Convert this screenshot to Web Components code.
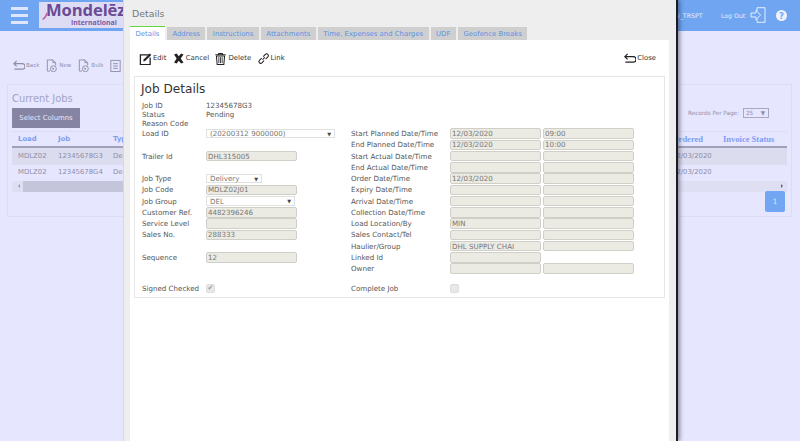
<!DOCTYPE html>
<html>
<head>
<meta charset="utf-8">
<title>Job Details</title>
<style>
  html, body { margin: 0; padding: 0; height: 100%; overflow: hidden; background: #e6e6ff; }
  body { font-family: "DejaVu Sans", Verdana, sans-serif; font-size: 7.1px; }
</style>
</head>
<body>
<job-page>
  <app-header slot="header"></app-header>
  <jobs-list slot="list"></jobs-list>
  <job-modal slot="modal"></job-modal>
</job-page>

<script>
// small helper so every component below has the same shape
function define(name, css, html) {
  customElements.define(name, class extends HTMLElement {
    constructor() {
      super();
      const shadow = this.attachShadow({ mode: 'open' });
      const markup = typeof html === 'function' ? html(this) : html;
      shadow.innerHTML = `<style>*{box-sizing:border-box}${css}</style>${markup}`;
    }
  });
}

const ICONS = {
  back: '<path d="M5 2 2 5l3 3M2.5 5H11c2 0 3 1.2 3 3s-1 3-3 3H2.5" fill="none" stroke="currentColor" stroke-width="1.3"/>',
  doc: '<path d="M2.5 1h6l3 3v3M2.5 1v12h3M8.5 1v3h3" fill="none" stroke="currentColor" stroke-width="1"/><circle cx="9" cy="10.5" r="3.2" fill="none" stroke="currentColor"/><path d="M8 9v3l2.2-1.5z" fill="currentColor"/>',
  list: '<rect x="2" y="1.5" width="10" height="12" fill="none" stroke="currentColor"/><path d="M4.5 5h5M4.5 7.5h5M4.5 10h5" stroke="currentColor"/>',
  edit: '<path d="M11 3H1.5v10.5H12V6" fill="none" stroke="currentColor" stroke-width="1.4"/><path d="M5 8.2 11.6 1.6l1.6 1.6L6.6 9.8 4.6 10.3z" fill="currentColor"/>',
  cancel: '<path d="M2.2 2.6 5 1.5l2.3 3 2.5-3 2.6 1.2-3 4.3 3 4.3-2.6 1.2-2.5-3-2.3 3-2.8-1.2L5 7z" fill="currentColor"/>',
  trash: '<path d="M1.5 3h11M5 3V1.5h4V3" fill="none" stroke="currentColor" stroke-width="1.1"/><path d="M2.6 4.2 3.4 13.5h7.2l.8-9.3z" fill="none" stroke="currentColor" stroke-width="1.1"/><path d="M5.2 5.5v6.5M7 5.5v6.5M8.8 5.5v6.5" stroke="currentColor" stroke-width=".9"/>',
  link: '<path d="M6 8.2 8.4 5.8M5 6.6 2.6 9a1.9 1.9 0 0 0 2.7 2.7L7.6 9.3M6.7 4.9 9 2.5a1.9 1.9 0 0 1 2.7 2.7L9.3 7.6" fill="none" stroke="currentColor" stroke-width="1.1"/>'
};
const icon = (name, size) => `<svg width="${size}" height="${size}" viewBox="0 0 14 14" aria-hidden="true">${ICONS[name]}</svg>`;

define('job-page', `
  :host { display: block; position: relative; width: 800px; height: 441px; overflow: hidden; background: #e6e6ff; }
  ::slotted([slot=modal]) { position: absolute; left: 124px; top: 0; }
`, `<slot name="header"></slot><slot name="list"></slot><slot name="modal"></slot>`);

define('app-header', `
  :host { display: flex; height: 31px; background: #6fa5f1; color: #e6eeff; align-items: flex-start; }
  .burger { width: 39px; padding: 7px 0 0 11px; display: flex; flex-direction: column; gap: 4px; }
  .burger i { display: block; width: 17px; height: 3px; background: #dfe6fb; }
  .logo { position: relative; width: 85px; height: 26px; margin-top: 2px; background: #dedcf5; display: flex; flex-direction: column; align-items: flex-start; white-space: nowrap; color: #6b4a94; }
  .logo b { font: bold 16.6px/14px "Open Sans", sans-serif; letter-spacing: -.1px; margin: 1px 0 0 7px; }
  .logo span { font: bold 6.9px/7px "Open Sans", sans-serif; margin: 2px 0 0 32px; color: #7d5aa5; }
  .logo svg { left: 2px; top: 10px; }
  .user { position: absolute; left: 675px; top: 12px; font-size: 6.3px; }
  .out { position: absolute; left: 721px; top: 12px; font-size: 6.2px; }
  svg { position: absolute; }
`, `
  <div class="burger"><i></i><i></i><i></i></div>
  <div class="logo"><svg width="7" height="9" viewBox="0 0 7 9"><path d="M6 1C5 4 4 7 1.5 7" fill="none" stroke="#c0609a" stroke-width="1.6"/></svg><b>Mondelēz</b><span>International</span></div>
  <span class="user">N_TRSPT</span>
  <span class="out">Log Out</span>
  <svg style="left:750px;top:7px" width="16" height="16" viewBox="0 0 16 16"><path d="M7 4V.7h8v14.6H7V12M1 6h5V3.2L10.5 8 6 12.8V10H1z" fill="none" stroke="#e6eeff"/></svg>
  <svg style="left:776px;top:10px" width="11" height="11" viewBox="0 0 11 11"><circle cx="5.5" cy="5.5" r="5.5" fill="#eef2ff"/><text x="5.5" y="8.8" text-anchor="middle" font-family="DejaVu Sans" font-weight="bold" font-size="8.5" fill="#6fa5f1">?</text></svg>
`);

define('jobs-list', `
  :host { display: block; color: #8e8ea8; }
  .tools { display: flex; gap: 6px; align-items: center; height: 14px; margin: 27px 0 0 12px; font-size: 5.5px; }
  .tools span { display: flex; align-items: center; gap: 1px; }
  .card { margin: 12px 8px 0 7px; height: 133px; border: 1px solid #dcdcf4; padding: 6px 4px 6px 4px; position: relative; }
  h2 { margin: 0; font: 400 9.9px/15px "DejaVu Sans", sans-serif; color: #a4a4c4; }
  .btn { width: 68px; height: 20px; margin-top: 2px; background: #8585a3; color: #e6e6ff; font-size: 6.9px; display: flex; align-items: center; justify-content: center; }
  .table { margin-top: 3px; font-size: 6.9px; }
  .row { display: grid; grid-template-columns: 40px 55px 559px 51px 64px; align-items: center; height: 15.5px; padding-left: 6px; border-top: 1px solid #dddcf2; }
  .row span { white-space: nowrap; }
  .head { color: #7f9cf0; font-weight: bold; border-bottom: 2px solid #a0a0b8; height: 17px; font-family: "Liberation Serif", serif; font-size: 8.5px; }
  .head .j { font-family: "DejaVu Sans", sans-serif; font-size: 6.9px; }
  .shade { background: #dcdcef; }
  .bar { position: relative; display: flex; height: 11px; background: #dfdff3; margin-top: 1.5px; align-items: center; }
  .bar i { display: block; height: 11px; width: 650px; margin-left: 11px; background: #c4c4da; }
  .bar b { position: absolute; top: 3.5px; width: 0; height: 0; border: 2px solid transparent; }
  .bar .l { left: 4px; border-right-color: #9a9ab0; }
  .bar .r { right: 2px; border-left-color: #66667c; }
  .recs { position: absolute; right: 22px; top: 23px; display: flex; gap: 4px; align-items: center; font-size: 5.7px; }
  .recs b { font-weight: 400; width: 26px; height: 10px; border: 1px solid #a8a8c0; padding: 0 3px 0 2px; display: flex; justify-content: space-between; align-items: center; }
  .page { position: absolute; right: 6px; top: 106px; width: 20px; height: 21px; background: #72a6f2; color: #dfe6fb; border-radius: 2px; display: flex; align-items: center; justify-content: center; }
`, `
  <div class="tools">
    <span>${icon('back', 13)}Back</span><span>${icon('doc', 13)}New</span><span>${icon('doc', 13)}Bulk</span><span>${icon('list', 13)}Jo</span>
  </div>
  <div class="card">
    <h2>Current Jobs</h2>
    <div class="btn">Select Columns</div>
    <div class="recs">Records Per Page: <b>25<span>▼</span></b></div>
    <div class="table">
      <div class="row head"><span class="j">Load</span><span class="j">Job</span><span class="j">Type</span><span>Ordered</span><span>Invoice Status</span></div>
      <div class="row shade"><span>MDLZ02</span><span>12345678G3</span><span>Del</span><span>12/03/2020</span><span></span></div>
      <div class="row"><span>MDLZ02</span><span>12345678G4</span><span>Del</span><span>12/03/2020</span><span></span></div>
      <div class="bar"><b class="l"></b><i></i><b class="r"></b></div>
    </div>
    <div class="page">1</div>
  </div>
`);

define('job-modal', `
  :host { display: block; box-sizing: border-box; width: 552px; height: 441px; background: #eeeeee; box-shadow: 2px 0 0 #1c1c24, 4px 0 4px rgba(30,30,50,.45), -1px 0 0 #d8d8e0; padding: 0 7px 0 6px; color: #555; }
  .title { height: 26px; font-size: 9.4px; color: #777; display: flex; align-items: center; padding-left: 2px; }
  .body { background: #fff; height: 401px; padding: 10px 4px 0 4px; margin-top: 14px; }
  .tabs { position: absolute; top: 26px; left: 6px; }
  .bar { display: flex; justify-content: space-between; padding: 0 9px 0 5px; height: 16px; margin-bottom: 10px; }
`, `
  <div class="title">Details</div>
  <div class="tabs"><job-tabs></job-tabs></div>
  <div class="body">
    <div class="bar">
      <div style="display:flex;gap:5.4px">
        <tool-btn icon="edit">Edit</tool-btn>
        <tool-btn icon="cancel">Cancel</tool-btn>
        <tool-btn icon="trash">Delete</tool-btn>
        <tool-btn icon="link">Link</tool-btn>
      </div>
      <tool-btn icon="back">Close</tool-btn>
    </div>
    <job-details></job-details>
  </div>
`);

define('job-tabs', `
  :host { display: flex; gap: 2px; font-size: 6.9px; }
  span { height: 13px; margin-top: 1px; background: #cfcfcf; color: #5c8fe6; display: flex; align-items: center; padding: 0 5.5px; white-space: nowrap; }
  .on { height: 14px; margin-top: 0; background: #fff; border-top: 1px solid #67d83c; }
`, ['Details','Address','Instructions','Attachments','Time, Expenses and Charges','UDF','Geofence Breaks']
  .map((t, i) => `<span class="${i ? '' : 'on'}">${t}</span>`).join(''));

customElements.define('tool-btn', class extends HTMLElement {
  constructor() {
    super();
    const shadow = this.attachShadow({ mode: 'open' });
    shadow.innerHTML = `<style>
      :host { display: flex; align-items: center; gap: 1px; font-size: 6.9px; color: #333; }
      svg { color: #222; }
    </style>${icon(this.getAttribute('icon'), 13)}<slot></slot>`;
  }
});

// one label + up to two inputs
customElements.define('field-row', class extends HTMLElement {
  constructor() {
    super();
    const shadow = this.attachShadow({ mode: 'open' });
    const cols = this.getAttribute('cols') || '';
    const vals = cols ? cols.split('|') : [];
    const inputs = vals.map(v => `<span class="in">${v}</span>`).join('');
    shadow.innerHTML = `<style>
      * { box-sizing: border-box; }
      :host { display: flex; height: 11.25px; align-items: center; white-space: nowrap; color: #555; }
      .lab { width: var(--lab, 64px); flex: none; }
      .in { width: 91px; height: 10.6px; margin-right: 2px; background: #ebebe4; border: 1px solid #cfcfc8; border-radius: 2px; color: #777; display: flex; align-items: center; padding-left: 1px; font-size: 7.1px; }
    </style><span class="lab">${this.getAttribute('label') || ''}</span>${inputs}<slot></slot>`;
  }
});

customElements.define('drop-list', class extends HTMLElement {
  constructor() {
    super();
    const shadow = this.attachShadow({ mode: 'open' });
    shadow.innerHTML = `<style>
      :host { display: flex; justify-content: space-between; align-items: center; box-sizing: border-box; height: 9.5px; background: #fff; border: 1px solid #e0e0e0; padding: 0 3px; color: #777; width: ${this.getAttribute('w')}px; font-size: 7.1px; }
      i { font-style: normal; font-size: 5px; color: #444; }
    </style><slot></slot><i>▼</i>`;
  }
});

define('job-details', `
  :host { display: block; box-sizing: border-box; height: 222px; border: 1px solid #e6e6e6; padding: 3px 7px; font-size: 7.1px; }
  h1 { margin: 0 0 0 -1px; font: 400 12.1px/18px "DejaVu Sans", sans-serif; color: #333; }
  .top { margin-top: 3px; line-height: 9px; display: grid; grid-template-columns: 64px 1fr; color: #555; }
  .cols { display: grid; grid-template-columns: 209px 1fr; margin-top: 0; }
  .left { --lab: 64px; }
  .right { --lab: 99px; }
  .checks { display: grid; grid-template-columns: 209px 1fr; margin-top: 8.5px; }
  .chk { display: block; width: 9px; height: 9px; background: #e8e8e8; border: 1px solid #ddd; border-radius: 2px; color: #999; font-size: 7px; line-height: 7px; text-align: center; }
`, `
  <h1>Job Details</h1>
  <div class="top">
    <span>Job ID</span><span>12345678G3</span>
    <span>Status</span><span>Pending</span>
    <span>Reason Code</span><span></span>
  </div>
  <div class="cols">
    <div class="left">
      <field-row label="Load ID"><drop-list w="129">(20200312 9000000)</drop-list></field-row>
      <field-row></field-row>
      <field-row label="Trailer Id" cols="DHL315005"></field-row>
      <field-row></field-row>
      <field-row label="Job Type"><drop-list w="56">Delivery</drop-list></field-row>
      <field-row label="Job Code" cols="MDLZ02J01"></field-row>
      <field-row label="Job Group"><drop-list w="89">DEL</drop-list></field-row>
      <field-row label="Customer Ref." cols="4482396246"></field-row>
      <field-row label="Service Level" cols=" "></field-row>
      <field-row label="Sales No." cols="288333"></field-row>
      <field-row></field-row>
      <field-row label="Sequence" cols="12"></field-row>
      <field-row></field-row>
    </div>
    <div class="right">
      <field-row label="Start Planned Date/Time" cols="12/03/2020|09:00"></field-row>
      <field-row label="End Planned Date/Time" cols="12/03/2020|10:00"></field-row>
      <field-row label="Start Actual Date/Time" cols=" | "></field-row>
      <field-row label="End Actual Date/Time" cols=" | "></field-row>
      <field-row label="Order Date/Time" cols="12/03/2020| "></field-row>
      <field-row label="Expiry Date/Time" cols=" | "></field-row>
      <field-row label="Arrival Date/Time" cols=" | "></field-row>
      <field-row label="Collection Date/Time" cols=" | "></field-row>
      <field-row label="Load Location/By" cols="MIN| "></field-row>
      <field-row label="Sales Contact/Tel" cols=" | "></field-row>
      <field-row label="Haulier/Group" cols="DHL SUPPLY CHAI| "></field-row>
      <field-row label="Linked Id" cols=" "></field-row>
      <field-row label="Owner" cols=" | "></field-row>
    </div>
  </div>
  <div class="checks">
    <field-row class="left" label="Signed Checked"><span class="chk">✔</span></field-row>
    <field-row class="right" label="Complete Job"><span class="chk"></span></field-row>
  </div>
`);
</script>
</body>
</html>
